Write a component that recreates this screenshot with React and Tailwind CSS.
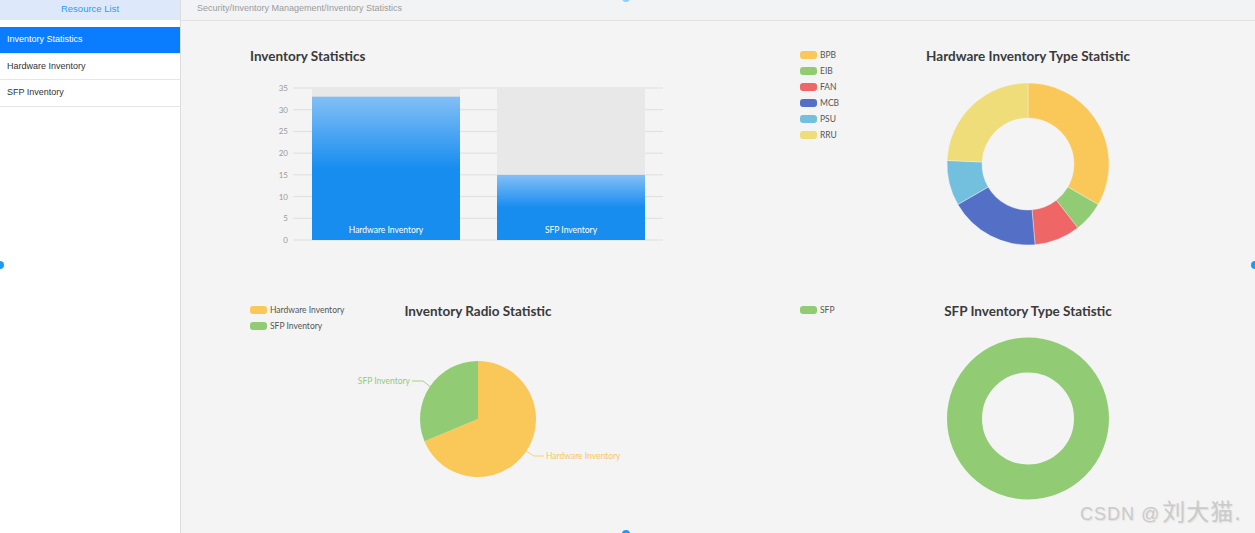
import React from "react";

const FONT = "Lato, 'Open Sans', sans-serif";

function pt(cx, cy, r, deg) {
  const a = (deg * Math.PI) / 180;
  return [cx + r * Math.sin(a), cy - r * Math.cos(a)];
}

function arc(cx, cy, r, ri, a0, a1) {
  const large = a1 - a0 > 180 ? 1 : 0;
  const [x0, y0] = pt(cx, cy, r, a0);
  const [x1, y1] = pt(cx, cy, r, a1);
  if (!ri) {
    return `M${cx} ${cy} L${x0} ${y0} A${r} ${r} 0 ${large} 1 ${x1} ${y1} Z`;
  }
  const [x2, y2] = pt(cx, cy, ri, a1);
  const [x3, y3] = pt(cx, cy, ri, a0);
  return `M${x0} ${y0} A${r} ${r} 0 ${large} 1 ${x1} ${y1} L${x2} ${y2} A${ri} ${ri} 0 ${large} 0 ${x3} ${y3} Z`;
}

const hwTypes = [
  { name: "BPB", color: "#fac858", from: 0, to: 120 },
  { name: "EIB", color: "#91cc75", from: 120, to: 142 },
  { name: "FAN", color: "#ee6666", from: 142, to: 175 },
  { name: "MCB", color: "#5470c6", from: 175, to: 240 },
  { name: "PSU", color: "#73c0de", from: 240, to: 272.5 },
  { name: "RRU", color: "#eedd78", from: 272.5, to: 360 },
];

const menu = ["Inventory Statistics", "Hardware Inventory", "SFP Inventory"];

function Legend({ x, y, items }) {
  return items.map((it, i) => (
    <g key={it.name}>
      <rect x={x} y={y + i * 16 - 4} width={17} height={8} rx={3} fill={it.color} />
      <text x={x + 20} y={y + i * 16 + 3} fontSize={8.5} fill="#555" fontFamily={FONT}>
        {it.name}
      </text>
    </g>
  ));
}

function Title({ x, y, anchor = "middle", children }) {
  return (
    <text x={x} y={y} textAnchor={anchor} fontSize={13.5} fontWeight="700" fill="#3a3a3a" fontFamily={FONT}>
      {children}
    </text>
  );
}

function BarChart() {
  const yOf = (v) => 240 - v * (152 / 35);
  const ticks = [0, 5, 10, 15, 20, 25, 30, 35];
  const bars = [
    { name: "Hardware Inventory", x: 312, v: 33 },
    { name: "SFP Inventory", x: 497, v: 15 },
  ];
  return (
    <svg viewBox="181 21 537 256" preserveAspectRatio="xMinYMin meet" className="w-full h-full block">
      <defs>
        <linearGradient id="barg" x1="0" y1="0" x2="0" y2="1">
          <stop offset="0" stopColor="#83bff6" />
          <stop offset="0.5" stopColor="#188df0" />
          <stop offset="1" stopColor="#188df0" />
        </linearGradient>
      </defs>
      <Title x={250} y={61} anchor="start">Inventory Statistics</Title>
      {ticks.map((t) => (
        <g key={t}>
          <line x1={293} x2={663} y1={yOf(t)} y2={yOf(t)} stroke="#dedede" strokeWidth={1} />
          <text x={288} y={yOf(t) + 3} textAnchor="end" fontSize={8} fill="#9a9a9a" fontFamily={FONT}>
            {t}
          </text>
        </g>
      ))}
      {bars.map((b) => (
        <g key={b.name}>
          <rect x={b.x} y={88} width={148} height={152} fill="#e8e8e8" />
          <rect x={b.x} y={yOf(b.v)} width={148} height={240 - yOf(b.v)} fill="url(#barg)" />
          <text x={b.x + 74} y={233} textAnchor="middle" fontSize={8.5} fill="#fff" fontFamily={FONT}>
            {b.name}
          </text>
        </g>
      ))}
    </svg>
  );
}

function HardwareTypeChart() {
  return (
    <svg viewBox="718 21 537 256" preserveAspectRatio="xMinYMin meet" className="w-full h-full block">
      <Legend x={800} y={55} items={hwTypes} />
      <Title x={1028} y={61}>Hardware Inventory Type Statistic</Title>
      {hwTypes.map((s) => (
        <path key={s.name} d={arc(1028, 164, 81, 46, s.from, s.to)} fill={s.color} stroke="#f4f4f4" strokeWidth={0.4} />
      ))}
    </svg>
  );
}

function RatioChart() {
  const cx = 478;
  const cy = 419;
  const r = 58;
  return (
    <svg viewBox="181 277 537 256" preserveAspectRatio="xMinYMin meet" className="w-full h-full block">
      <Legend
        x={250}
        y={310}
        items={[
          { name: "Hardware Inventory", color: "#fac858" },
          { name: "SFP Inventory", color: "#91cc75" },
        ]}
      />
      <Title x={478} y={316}>Inventory Radio Statistic</Title>
      <path d={arc(cx, cy, r, 0, 0, 247.5)} fill="#fac858" />
      <path d={arc(cx, cy, r, 0, 247.5, 360)} fill="#91cc75" />
      <polyline points="430,386.5 423,381 412,381" fill="none" stroke="#91cc75" strokeWidth={0.8} />
      <text x={410} y={383.5} textAnchor="end" fontSize={8.5} fill="#91cc75" fontFamily={FONT}>
        SFP Inventory
      </text>
      <polyline points="526,451 534,456 544,456" fill="none" stroke="#fac858" strokeWidth={0.8} />
      <text x={546} y={459} fontSize={8.5} fill="#fac858" fontFamily={FONT}>
        Hardware Inventory
      </text>
    </svg>
  );
}

function SfpTypeChart() {
  return (
    <svg viewBox="718 277 537 256" preserveAspectRatio="xMinYMin meet" className="w-full h-full block">
      <Legend x={800} y={310} items={[{ name: "SFP", color: "#91cc75" }]} />
      <Title x={1028} y={316}>SFP Inventory Type Statistic</Title>
      <circle cx={1028} cy={418.5} r={63.5} fill="none" stroke="#91cc75" strokeWidth={35} />
    </svg>
  );
}

export default function App() {
  return (
    <div
      className="relative flex h-screen w-full overflow-hidden bg-[#f4f4f4]"
      style={{ fontFamily: "'Liberation Sans', Arial, sans-serif" }}
    >
      <aside className="w-[181px] shrink-0 bg-white border-r border-[#dcdcdc] flex flex-col">
        <div className="h-[20px] bg-[#dde9fb] flex items-center justify-center pb-[2px] text-[9.5px] text-[#2a9bf5]">
          Resource List
        </div>
        <ul className="mt-[7px]">
          {menu.map((m, i) => (
            <li
              key={m}
              className={
                i === 0
                  ? "h-[26.5px] flex items-center pl-[7px] text-[9px] bg-[#0a7dff] text-white border-b border-[#e6e6e6]"
                  : "h-[26.5px] flex items-center pl-[7px] text-[9px] text-[#333] border-b border-[#e6e6e6]"
              }
            >
              {m}
            </li>
          ))}
        </ul>
      </aside>
      <main className="flex-1 flex flex-col min-w-0">
        <div className="h-[21px] shrink-0 bg-[#f2f3f5] border-b border-[#e2e2e2] pl-[16px] pb-[3px] flex items-center text-[9px] text-[#9b9b9b]">
          Security/Inventory Management/Inventory Statistics
        </div>
        <div className="flex-1 grid grid-cols-2 grid-rows-2">
          <BarChart />
          <HardwareTypeChart />
          <RatioChart />
          <SfpTypeChart />
        </div>
      </main>

      <div
        className="absolute left-[1080px] bottom-[9px] flex items-baseline text-[#cbcbcb] leading-none whitespace-nowrap"
        style={{ fontFamily: "'Liberation Sans', 'Noto Sans CJK SC', sans-serif", textShadow: "1px 1px 1px #e0e0e0" }}
      >
        <span className="text-[18px] tracking-[1px]">CSDN @</span>
        <span className="text-[23px] tracking-[1px] ml-[2px]">刘大猫.</span>
      </div>

      <span className="absolute left-[-4px] top-[261px] w-[8px] h-[8px] rounded-full bg-[#1a9bfc]" />
      <span className="absolute right-[-4px] top-[261px] w-[8px] h-[8px] rounded-full bg-[#1a9bfc]" />
      <span className="absolute left-[622px] bottom-[-5px] w-[8px] h-[8px] rounded-full bg-[#1a9bfc]" />
      <span className="absolute left-[622px] top-[-6px] w-[8px] h-[8px] rounded-full bg-[#8ccdfb]" />
    </div>
  );
}
